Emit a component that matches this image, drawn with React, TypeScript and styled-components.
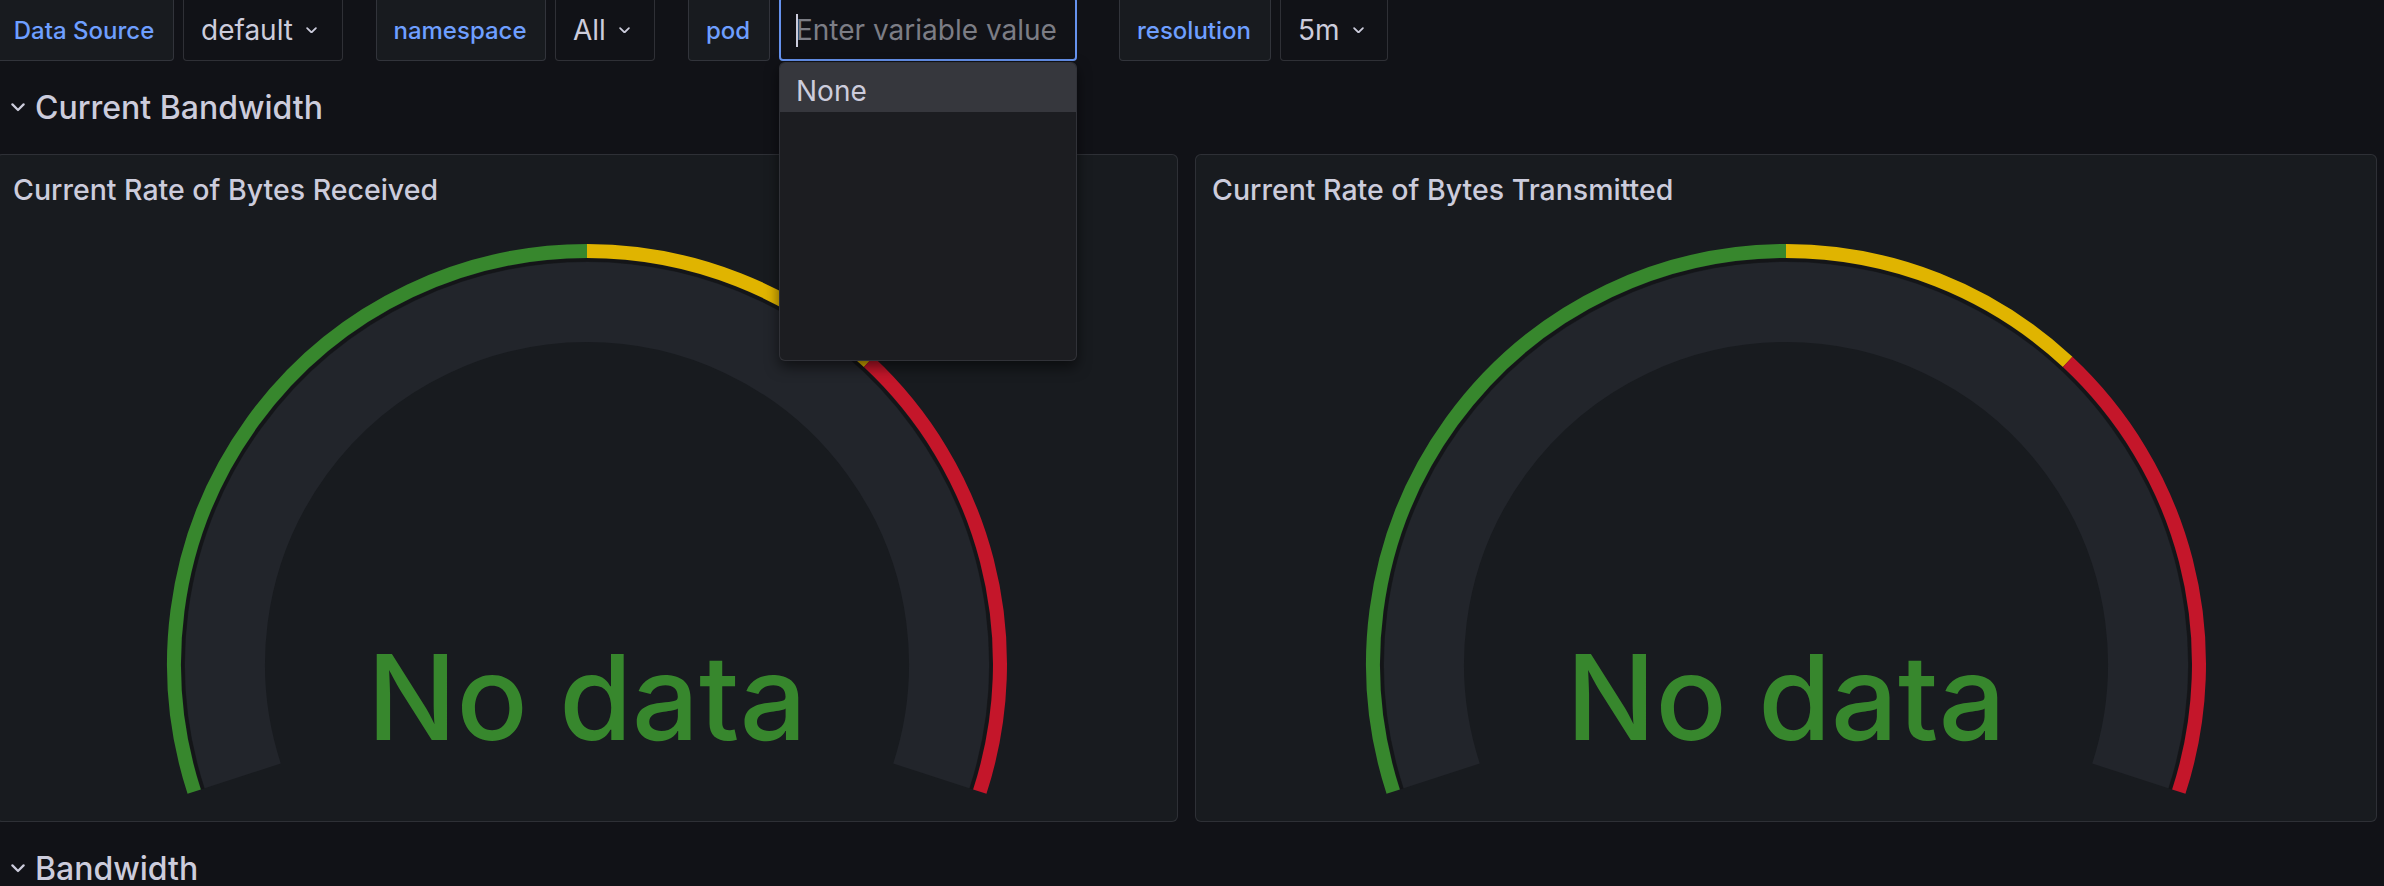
import React from 'react';
import styled, { createGlobalStyle } from 'styled-components';

const GlobalStyle = createGlobalStyle`
  html, body {
    margin: 0;
    padding: 0;
    background: #111217;
    overflow: hidden;
  }
  body {
    font-family: Inter, "Noto Sans", sans-serif;
    color: #ccccdc;
  }
`;

const Page = styled.div`
  margin: -3px 7px 0 -4px;
  display: flex;
  flex-direction: column;
`;

const VariableBar = styled.div`
  display: flex;
  height: 64px;
`;

const VariableGroup = styled.div<{ $after?: number }>`
  display: flex;
  gap: 9px;
  margin-right: ${p => p.$after ?? 33}px;
`;

const VarLabel = styled.label<{ $w: number }>`
  width: ${p => p.$w}px;
  box-sizing: border-box;
  display: flex;
  align-items: center;
  justify-content: center;
  background: #181b1f;
  border: 1px solid rgba(204, 204, 220, 0.15);
  border-radius: 4px;
  color: #6e9fff;
  font-size: 24px;
  font-weight: 500;
  padding: 2px 2px 0 0;
`;

const VarSelect = styled.div<{ $w: number }>`
  width: ${p => p.$w}px;
  box-sizing: border-box;
  display: flex;
  align-items: center;
  gap: 13px;
  padding: 2px 0 0 17px;
  background: #111217;
  border: 1px solid rgba(204, 204, 220, 0.16);
  border-radius: 4px;
  font-size: 28px;
  color: #ccccdc;
`;

const InputWrap = styled.div`
  position: relative;
  display: flex;
`;

const TextInput = styled.input`
  width: 298px;
  height: 64px;
  box-sizing: border-box;
  background: #111217;
  border: 2px solid #6692ee;
  border-radius: 4px;
  padding: 2px 15px 0;
  font-family: Inter, "Noto Sans", sans-serif;
  font-size: 28px;
  color: #ccccdc;
  caret-color: #ccccdc;
  outline: none;
  &::placeholder {
    color: #7c7d85;
  }
`;

/* text caret drawn over the empty, focused input */
const Caret = styled.span`
  position: absolute;
  left: 17px;
  top: 17px;
  width: 2px;
  height: 33px;
  background: #ccccdc;
  pointer-events: none;
`;

const Menu = styled.div`
  position: absolute;
  top: calc(100% + 1px);
  left: 0;
  width: 298px;
  height: 299px;
  box-sizing: border-box;
  background: #1c1d21;
  border: 1px solid rgba(204, 204, 220, 0.12);
  border-radius: 6px;
  box-shadow: 0 6px 14px rgba(0, 0, 0, 0.55);
  overflow: hidden;
  z-index: 10;
`;

const MenuOption = styled.div<{ $active?: boolean }>`
  height: 49px;
  box-sizing: border-box;
  display: flex;
  align-items: center;
  padding: 6px 16px 0;
  background: ${p => (p.$active ? '#36373d' : 'transparent')};
  font-size: 28px;
  color: #ccccdc;
`;

const RowHeader = styled.div`
  height: 93px;
  flex: none;
  display: flex;
  align-items: center;
  gap: 10px;
  padding-left: 15px;
  font-size: 32px;
  font-weight: 500;
  color: #ccccdc;
`;

const PanelGrid = styled.div`
  display: grid;
  grid-template-columns: 1fr 1fr;
  gap: 17px;
  height: 668px;
`;

const Panel = styled.section`
  display: flex;
  flex-direction: column;
  background: #181b1f;
  border: 1px solid rgba(204, 204, 220, 0.12);
  border-radius: 6px;
  overflow: hidden;
`;

const PanelHeader = styled.header`
  height: 68px;
  box-sizing: border-box;
  display: flex;
  align-items: center;
  padding: 0 16px;
  font-size: 28.5px;
  font-weight: 500;
  color: #ccccdc;
`;

const GaugeSvg = styled.svg`
  align-self: center;
  margin-top: 11px;
  flex: none;
`;

const Chevron = ({ size }: { size: number }) => (
  <svg width={size} height={size * 0.6} viewBox="0 0 10 6" fill="none">
    <path d="M1 1l4 4 4-4" stroke="#ccccdc" strokeWidth={1.6} strokeLinecap="round" strokeLinejoin="round" />
  </svg>
);

const W = 860;
const H = 580;
const CX = W / 2;
const CY = 430;

function pt(r: number, deg: number) {
  const a = (deg * Math.PI) / 180;
  return [CX + r * Math.cos(a), CY - r * Math.sin(a)];
}

function arc(r: number, from: number, to: number) {
  const [x1, y1] = pt(r, from);
  const [x2, y2] = pt(r, to);
  const large = from - to > 180 ? 1 : 0;
  return `M ${x1} ${y1} A ${r} ${r} 0 ${large} 1 ${x2} ${y2}`;
}

const thresholds = [
  { from: 198, to: 90, color: '#37872d' },
  { from: 90, to: 47, color: '#e0b400' },
  { from: 47, to: -18, color: '#c4162a' },
];

const Gauge = () => (
  <GaugeSvg width={W} height={H} viewBox={`0 0 ${W} ${H}`}>
    <path d={arc(362, 198, -18)} stroke="#22252b" strokeWidth={80} fill="none" />
    <path d={arc(404, 198, -18)} stroke="#141518" strokeWidth={3} fill="none" />
    {thresholds.map(t => (
      <path key={t.color} d={arc(413, t.from, t.to)} stroke={t.color} strokeWidth={14} fill="none" />
    ))}
    <text
      x={CX}
      y={506}
      textAnchor="middle"
      fill="#37872d"
      fontSize={118}
      fontWeight={500}
      fontFamily='Inter, "Noto Sans", sans-serif'
    >
      No data
    </text>
  </GaugeSvg>
);

const GaugePanel = ({ title }: { title: string }) => (
  <Panel>
    <PanelHeader>{title}</PanelHeader>
    <Gauge />
  </Panel>
);

export default function App() {
  return (
    <>
      <GlobalStyle />
      <Page>
        <VariableBar>
          <VariableGroup>
            <VarLabel $w={178}>Data Source</VarLabel>
            <VarSelect $w={160}>default<Chevron size={11} /></VarSelect>
          </VariableGroup>
          <VariableGroup>
            <VarLabel $w={170}>namespace</VarLabel>
            <VarSelect $w={100}>All<Chevron size={11} /></VarSelect>
          </VariableGroup>
          <VariableGroup $after={42}>
            <VarLabel $w={82}>pod</VarLabel>
            <InputWrap>
              <TextInput placeholder="Enter variable value" />
              <Caret />
              <Menu>
                <MenuOption $active>None</MenuOption>
              </Menu>
            </InputWrap>
          </VariableGroup>
          <VariableGroup>
            <VarLabel $w={152}>resolution</VarLabel>
            <VarSelect $w={108}>5m<Chevron size={11} /></VarSelect>
          </VariableGroup>
        </VariableBar>

        <RowHeader>
          <Chevron size={14} />
          Current Bandwidth
        </RowHeader>

        <PanelGrid>
          <GaugePanel title="Current Rate of Bytes Received" />
          <GaugePanel title="Current Rate of Bytes Transmitted" />
        </PanelGrid>

        <RowHeader>
          <Chevron size={14} />
          Bandwidth
        </RowHeader>
      </Page>
    </>
  );
}
